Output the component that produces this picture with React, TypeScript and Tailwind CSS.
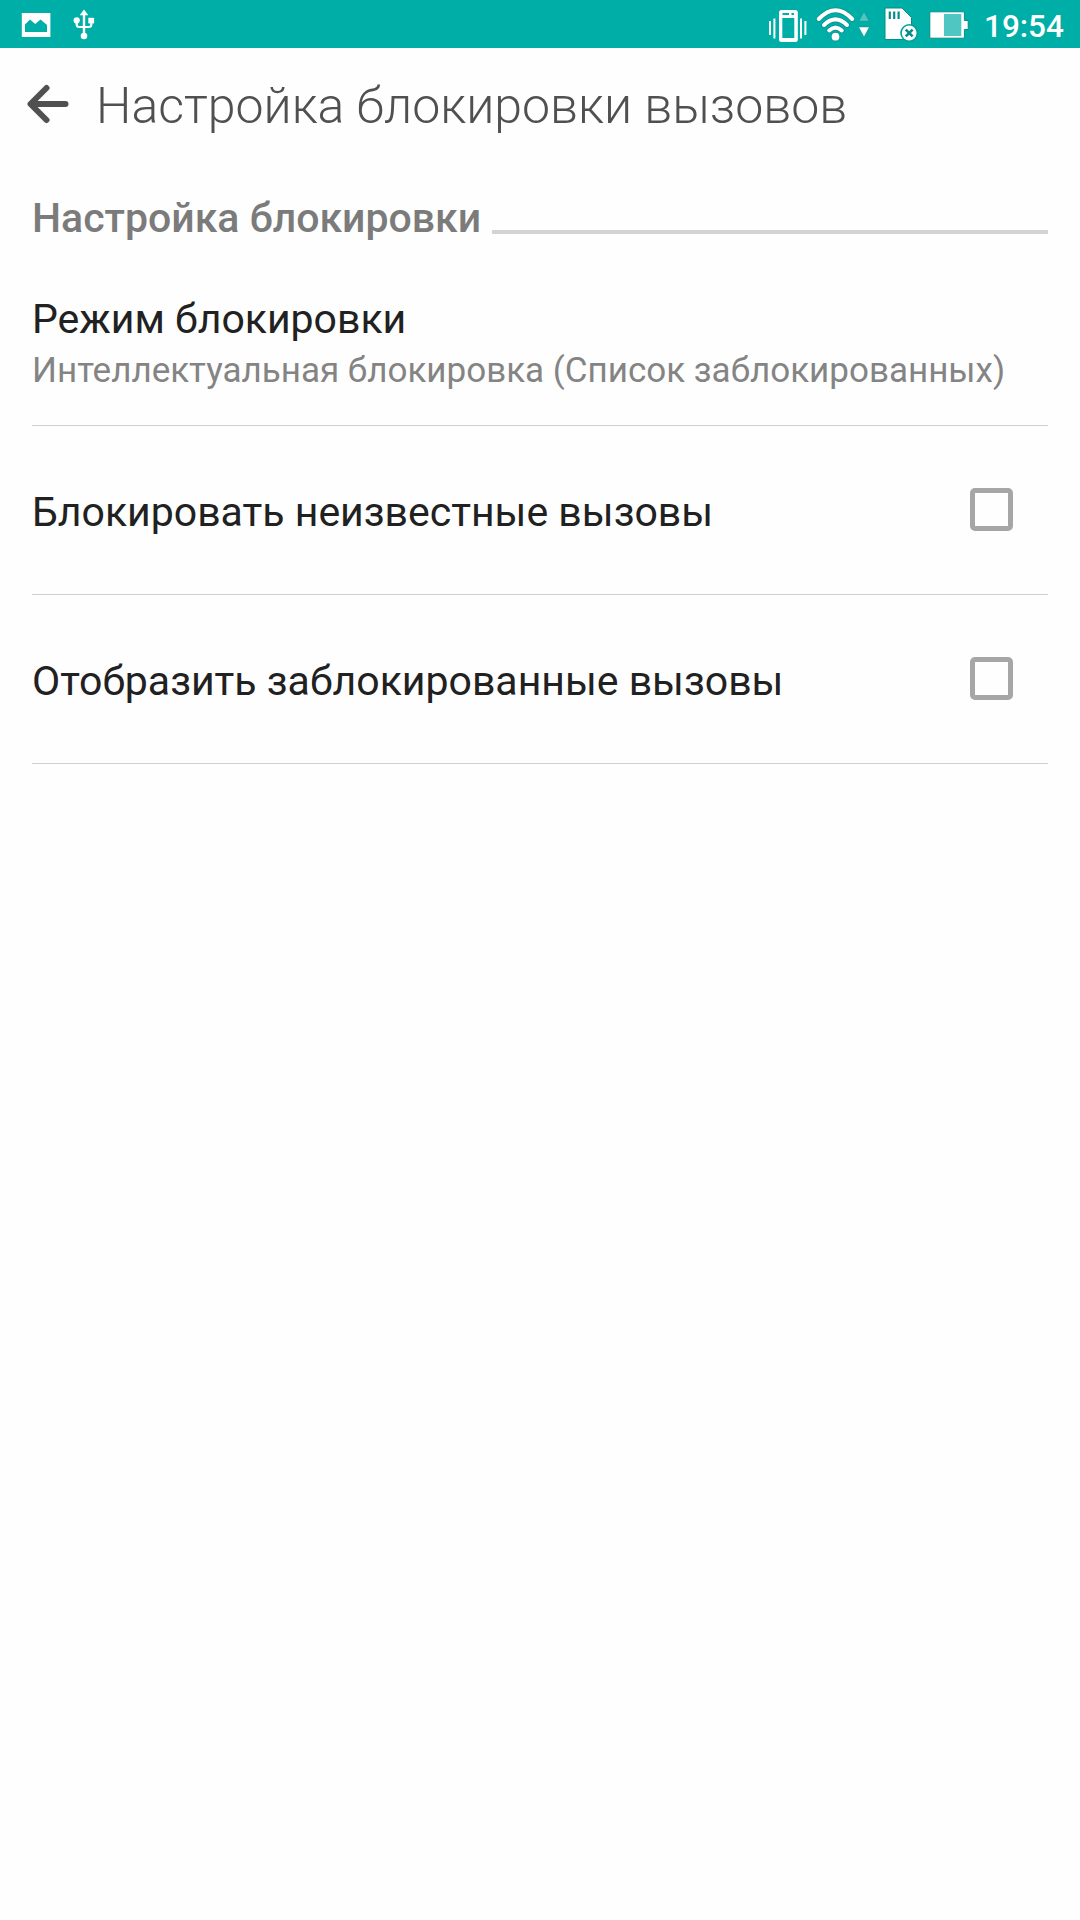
import { useState } from "react";

const toggles = [
    { id: "unknown", label: "Блокировать неизвестные вызовы" },
    { id: "show", label: "Отобразить заблокированные вызовы" },
];

function PictureIcon() {
    return (
        <svg width="30" height="26" viewBox="0 0 30 26" fill="none">
            <rect x="0.8" y="1" width="28.6" height="24" fill="#fff" />
            <path d="M4 20V12.5L9 7.5L14.2 12L19.5 7.5L26 13V20Z" fill="#00aea8" />
        </svg>
    );
}

function UsbIcon() {
    return (
        <svg width="22" height="32" viewBox="0 0 22 32" fill="none">
            <path d="M11 5V26" stroke="#fff" strokeWidth="2.4" />
            <path d="M11 1.5L15.3 7.2H6.7Z" fill="#fff" />
            <path
                d="M3.7 11.5V16.5Q3.7 19 6.2 19H15.8Q18.3 19 18.3 16.5V11.5"
                stroke="#fff"
                strokeWidth="2.2"
            />
            <circle cx="3.7" cy="12.4" r="3.1" fill="#fff" />
            <rect x="15.3" y="9.8" width="5.8" height="5.6" fill="#fff" />
            <circle cx="11" cy="28" r="3.3" fill="#fff" />
        </svg>
    );
}

function VibrateIcon() {
    return (
        <svg width="40" height="34" viewBox="0 0 40 34" fill="none">
            <rect x="11" y="1" width="18.8" height="32" rx="2.5" fill="#fff" />
            <rect x="14.3" y="9" width="12" height="20" fill="#00aea8" />
            <path d="M14.5 5H21M23.5 5H26" stroke="#00aea8" strokeWidth="1.8" />
            <path
                d="M2 12V26M6.4 9.5V29.5M33 9.5V29.5M37.4 12V26"
                stroke="#fff"
                strokeWidth="2"
            />
        </svg>
    );
}

function WifiIcon() {
    return (
        <svg width="54" height="36" viewBox="0 0 54 36" fill="none">
            <g stroke="#078d88" strokeWidth="5.4" strokeLinecap="round">
                <path d="M2.8 12Q19.5 -5.6 36.2 12" />
                <path d="M8 18Q19.5 6.8 31 18" />
                <path d="M13.2 23.5Q19.5 17.6 25.8 23.5" />
            </g>
            <circle cx="19.5" cy="29.7" r="4.6" fill="#078d88" />
            <g stroke="#fff" strokeWidth="4" strokeLinecap="round">
                <path d="M2.8 12Q19.5 -5.6 36.2 12" />
                <path d="M8 18Q19.5 6.8 31 18" />
                <path d="M13.2 23.5Q19.5 17.6 25.8 23.5" />
            </g>
            <circle cx="19.5" cy="29.7" r="3.9" fill="#fff" />
            <path
                d="M48 4.5L53.2 14.3H42.8Z"
                fill="#4fc6c1"
                stroke="#078d88"
                strokeWidth="0.5"
            />
            <path
                d="M48 30L42.6 20H53.4Z"
                fill="#fff"
                stroke="#078d88"
                strokeWidth="0.5"
            />
        </svg>
    );
}

function SdCardIcon() {
    return (
        <svg width="34" height="35" viewBox="0 0 34 35" fill="none">
            <path
                d="M1 1H18L27.5 10.5V32.5H1Z"
                fill="#fff"
                stroke="#078d88"
                strokeWidth="1"
            />
            <path
                d="M5.8 4.5V12M10.2 4.5V12M14.6 4.5V12"
                stroke="#078d88"
                strokeWidth="2.2"
            />
            <circle cx="25.2" cy="26" r="9" fill="#00a09a" />
            <circle cx="25.2" cy="26" r="7.4" fill="#fff" />
            <path
                d="M21.8 22.6L28.6 29.4M28.6 22.6L21.8 29.4"
                stroke="#078d88"
                strokeWidth="2.6"
            />
        </svg>
    );
}

function BatteryIcon() {
    return (
        <svg width="40" height="28" viewBox="0 0 40 28" fill="none">
            <path
                d="M0.8 0.8H35.4V9.5H39.2V18.5H35.4V27.2H0.8Z"
                fill="#fff"
                stroke="#078d88"
                strokeWidth="1"
            />
            <rect x="15" y="3" width="17.3" height="22" fill="#4fc6c1" />
        </svg>
    );
}

function StatusBar() {
    return (
        <div className="flex h-12 w-full items-start bg-[#00aea8] text-white">
            <div className="flex pl-[21px]">
                <div className="pt-3">
                    <PictureIcon />
                </div>
                <div className="pt-2 pl-[22px]">
                    <UsbIcon />
                </div>
            </div>
            <div className="ml-auto flex h-12 pr-4">
                <div className="pt-[9px]">
                    <VibrateIcon />
                </div>
                <div className="pt-[7px] pl-[8px]">
                    <WifiIcon />
                </div>
                <div className="pt-[7px] pl-[14px]">
                    <SdCardIcon />
                </div>
                <div className="pt-[11px] pl-[11px]">
                    <BatteryIcon />
                </div>
                <span className="mt-[6px] ml-[15px] w-[80px] text-[31.5px] leading-[42px] font-medium whitespace-nowrap">
                    19:54
                </span>
            </div>
        </div>
    );
}

function BackArrow() {
    return (
        <svg width="42" height="40" viewBox="0 0 42 40" fill="none">
            <path
                d="M19.5 4L3.5 20L19.5 36M4 20H38.5"
                stroke="#505050"
                strokeWidth="6"
                strokeLinecap="round"
                strokeLinejoin="round"
            />
        </svg>
    );
}

function ToggleRow({ label }: { label: string }) {
    const [checked, setChecked] = useState(false);

    return (
        <label className="flex h-[169px] cursor-pointer items-start justify-between border-b border-[#cfcfcf] pr-[35px]">
            <span className="pt-[62px] text-[41px] leading-[48px] text-[#212121]">{label}</span>
            <input
                type="checkbox"
                checked={checked}
                onChange={() => setChecked(!checked)}
                className="mt-[62px] h-[43px] w-[43px] appearance-none rounded-[5px] border-[5px] border-[#a6a6a6] checked:bg-[#00aea8]"
            />
        </label>
    );
}

export default function App() {
    return (
        <div className="flex min-h-[1920px] w-[1080px] flex-col bg-[#fefefe] font-['Roboto',sans-serif]">
            <StatusBar />

            <header className="flex h-[112px] items-center pl-[27px]">
                <button aria-label="Назад">
                    <BackArrow />
                </button>
                <h1 className="pt-1 pl-[27px] text-[50px] leading-[60px] font-light whitespace-nowrap text-[#505050]">
                    Настройка блокировки вызовов
                </h1>
            </header>

            <main className="px-8">
                <div className="flex h-[116px] items-start pt-[34px]">
                    <h2 className="text-[41px] leading-[48px] font-medium whitespace-nowrap text-[#7b7b7b]">
                        Настройка блокировки
                    </h2>
                    <div className="mt-[36px] ml-[11px] h-1 flex-1 bg-[#d3d4d6]" />
                </div>

                {/* Block mode */}
                <div className="flex h-[150px] flex-col border-b border-[#cfcfcf] pt-[19px]">
                    <p className="text-[41px] leading-[48px] text-[#212121]">Режим блокировки</p>
                    <p className="pt-[7px] text-[35px] leading-[42px] whitespace-nowrap text-[#848484]">
                        Интеллектуальная блокировка (Список заблокированных)
                    </p>
                </div>

                {toggles.map((t) => (
                    <ToggleRow key={t.id} label={t.label} />
                ))}
            </main>
        </div>
    );
}
